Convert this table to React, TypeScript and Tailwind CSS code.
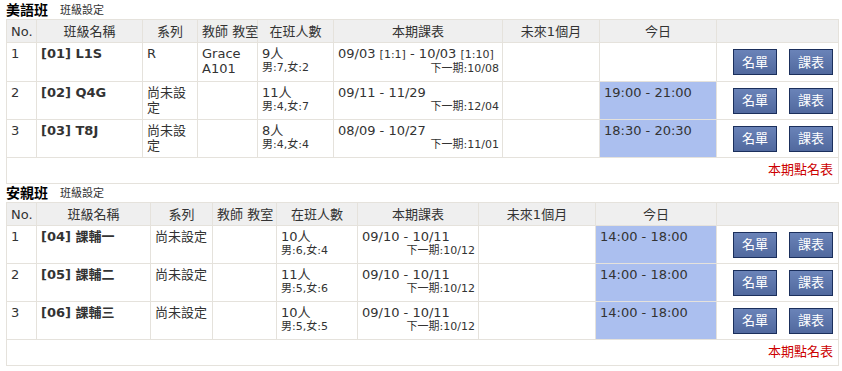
import React from "react";

type Row = {
  no: number;
  name: string;
  series: string;
  teacher?: string[];
  count: string;
  gender: string;
  period: React.ReactNode;
  next: string;
  today?: string;
};

type Section = {
  title: string;
  cols: number[];
  rows: Row[];
  rowHeights: string[];
  titleH: string;
};

const sections: Section[] = [
  {
    title: "美語班",
    titleH: "h-[19px]",
    cols: [30, 106, 55, 60, 76, 169, 97, 117, 122],
    rowHeights: ["h-[39px]", "h-[38px]", "h-[38px]"],
    rows: [
      {
        no: 1,
        name: "[01] L1S",
        series: "R",
        teacher: ["Grace", "A101"],
        count: "9人",
        gender: "男:7,女:2",
        period: (
          <>
            09/03 <span className="text-[11px]">[1:1]</span> - 10/03{" "}
            <span className="text-[11px]">[1:10]</span>
          </>
        ),
        next: "下一期:10/08",
      },
      {
        no: 2,
        name: "[02] Q4G",
        series: "尚未設定",
        count: "11人",
        gender: "男:4,女:7",
        period: "09/11 - 11/29",
        next: "下一期:12/04",
        today: "19:00 - 21:00",
      },
      {
        no: 3,
        name: "[03] T8J",
        series: "尚未設定",
        count: "8人",
        gender: "男:4,女:4",
        period: "08/09 - 10/27",
        next: "下一期:11/01",
        today: "18:30 - 20:30",
      },
    ],
  },
  {
    title: "安親班",
    titleH: "h-[18px]",
    cols: [30, 114, 62, 64, 81, 121, 117, 121, 122],
    rowHeights: ["h-[38px]", "h-[38px]", "h-[38px]"],
    rows: [
      {
        no: 1,
        name: "[04] 課輔一",
        series: "尚未設定",
        count: "10人",
        gender: "男:6,女:4",
        period: "09/10 - 10/11",
        next: "下一期:10/12",
        today: "14:00 - 18:00",
      },
      {
        no: 2,
        name: "[05] 課輔二",
        series: "尚未設定",
        count: "11人",
        gender: "男:5,女:6",
        period: "09/10 - 10/11",
        next: "下一期:10/12",
        today: "14:00 - 18:00",
      },
      {
        no: 3,
        name: "[06] 課輔三",
        series: "尚未設定",
        count: "10人",
        gender: "男:5,女:5",
        period: "09/10 - 10/11",
        next: "下一期:10/12",
        today: "14:00 - 18:00",
      },
    ],
  },
];

const cell = "border border-[#e5e2dc] pl-[4px] pr-[3px] pt-[3px] align-top leading-[15px]";
const headCell = "border border-[#e5e2dc] bg-[#efefef] px-[4px] h-[23px] font-normal leading-[15px]";

const Btn = ({ children }: { children: React.ReactNode }) => (
  <button className="h-[26px] w-[44px] border border-[#1b2f5c] bg-gradient-to-b from-[#6a83b8] to-[#51699e] text-[13px] leading-none text-white">
    {children}
  </button>
);

const ClassTable = ({ section }: { section: Section }) => (
  <div>
    <div className={`flex ${section.titleH} items-end gap-[12px] pb-[1px]`}>
      <span className="text-[14px] font-bold leading-[16px] text-black">{section.title}</span>
      <span className="text-[11px] leading-[14px] text-[#333]">班級設定</span>
    </div>
    <table className="w-[832px] table-fixed border-collapse border border-[#e5e2dc] text-[13px] text-[#333]">
      <colgroup>
        {section.cols.map((w, i) => (
          <col key={i} style={{ width: w }} />
        ))}
      </colgroup>
      <thead>
        <tr>
          <th className={`${headCell} text-left`}>No.</th>
          <th className={headCell}>班級名稱</th>
          <th className={headCell}>系列</th>
          <th className={`${headCell} whitespace-nowrap px-0`}>教師 教室</th>
          <th className={headCell}>在班人數</th>
          <th className={headCell}>本期課表</th>
          <th className={headCell}>未來1個月</th>
          <th className={headCell}>今日</th>
          <th className={headCell}></th>
        </tr>
      </thead>
      <tbody>
        {section.rows.map((r, i) => (
          <tr key={r.no} className={section.rowHeights[i]}>
            <td className={cell}>{r.no}</td>
            <td className={`${cell} font-bold`}>{r.name}</td>
            <td className={cell}>{r.series}</td>
            <td className={cell}>
              {r.teacher?.map((t) => (
                <div key={t}>{t}</div>
              ))}
            </td>
            <td className={cell}>
              <div>{r.count}</div>
              <div className="text-[11px] leading-[14px]">{r.gender}</div>
            </td>
            <td className={cell}>
              <div className="whitespace-nowrap">{r.period}</div>
              <div className="text-right text-[11px] leading-[14px]">{r.next}</div>
            </td>
            <td className={cell}></td>
            <td className={`${cell} ${r.today ? "bg-[#abbfef]" : ""}`}>{r.today}</td>
            <td className="border border-[#e5e2dc] px-[5px] align-middle">
              <div className="flex justify-end gap-[12px]">
                <Btn>名單</Btn>
                <Btn>課表</Btn>
              </div>
            </td>
          </tr>
        ))}
        <tr className="h-[26px]">
          <td colSpan={9} className="border border-[#e5e2dc] px-[5px] pt-[4px] text-right align-top leading-[15px] text-[#cc0000]">
            本期點名表
          </td>
        </tr>
      </tbody>
    </table>
  </div>
);

export default function App() {
  return (
    <div
      className="flex w-[842px] flex-col bg-white pl-[6px]"
      style={{ fontFamily: '"DejaVu Sans", "Noto Sans CJK TC", sans-serif' }}
    >
      {sections.map((s) => (
        <ClassTable key={s.title} section={s} />
      ))}
    </div>
  );
}
